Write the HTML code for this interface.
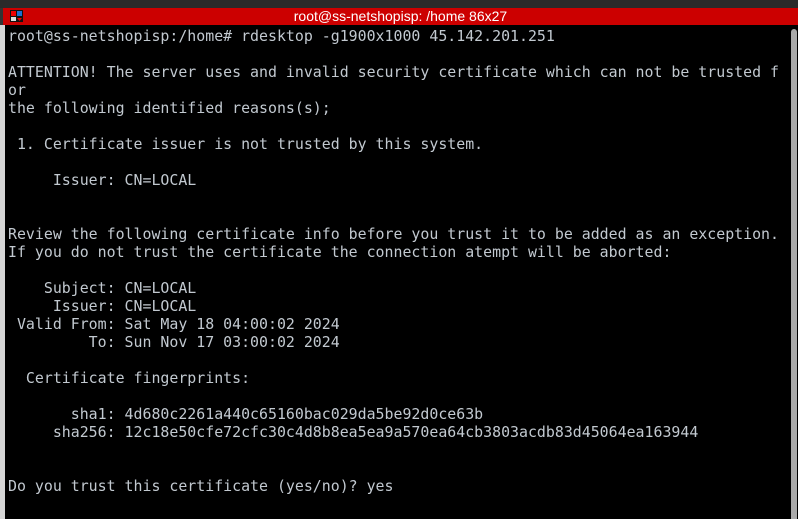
<!DOCTYPE html>
<html><head><style>
html,body{margin:0;padding:0;width:798px;height:519px;overflow:hidden;background:#000}
#top{position:absolute;left:0;top:0;width:798px;height:8px;background:#2a2a2a}
#title{position:absolute;left:3px;top:8px;width:795px;height:17px;background:#cc0000;color:#fff;font:14px "Liberation Sans",sans-serif;line-height:17px;text-align:center}
#ico{position:absolute;left:6px;top:1px;width:15px;height:14px}
#left{position:absolute;left:0;top:25px;width:5px;height:494px;background:#d6d6d6}
#left2{position:absolute;left:0;top:8px;width:3px;height:37px;background:#333}
#term{position:absolute;left:5px;top:25px;width:785px;height:494px;background:#000}
pre{position:absolute;left:8px;top:27px;margin:0;font:14.9px "DejaVu Sans Mono","Liberation Mono",monospace;line-height:18px;color:#c2c9d0;white-space:pre}
#sb{position:absolute;left:791px;top:29px;width:6px;height:490px;background:#aaa;border-radius:3px 3px 0 0}
</style></head><body>
<div id="top"></div>
<div id="title">
<svg id="ico" viewBox="0 0 15 14"><rect x="0" y="0" width="15" height="14" fill="#cc0000"/><rect x="1" y="1" width="13" height="12" fill="#111"/><rect x="2" y="2" width="5" height="5" fill="#e00"/><rect x="8" y="2" width="5" height="5" fill="#1e6fd0"/><rect x="2" y="8" width="5" height="4" fill="#ddd"/><path d="M8 9h5l-2.5 3z" fill="#e00"/></svg>
root@ss-netshopisp: /home 86x27</div>
<div id="left2"></div>
<div id="left"></div>
<div id="term"></div>
<pre>root@ss-netshopisp:/home# rdesktop -g1900x1000 45.142.201.251

ATTENTION! The server uses and invalid security certificate which can not be trusted f
or
the following identified reasons(s);

 1. Certificate issuer is not trusted by this system.

     Issuer: CN=LOCAL


Review the following certificate info before you trust it to be added as an exception.
If you do not trust the certificate the connection atempt will be aborted:

    Subject: CN=LOCAL
     Issuer: CN=LOCAL
 Valid From: Sat May 18 04:00:02 2024
         To: Sun Nov 17 03:00:02 2024

  Certificate fingerprints:

       sha1: 4d680c2261a440c65160bac029da5be92d0ce63b
     sha256: 12c18e50cfe72cfc30c4d8b8ea5ea9a570ea64cb3803acdb83d45064ea163944


Do you trust this certificate (yes/no)? yes</pre>
<div id="sb"></div>
</body></html>
